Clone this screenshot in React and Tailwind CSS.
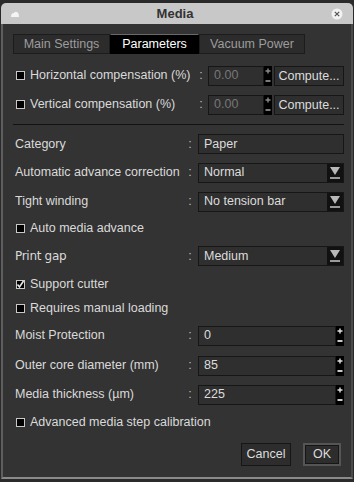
import React from "react";

function CheckBox({ checked }) {
  return (
    <span className="relative inline-block w-[9px] h-[9px] border border-[#c8c8c8] bg-black shrink-0">
      {checked && (
        <svg viewBox="0 0 9 9" className="absolute -top-[1px] -left-[1px] w-[9px] h-[9px]">
          <path d="M1.5 4.5 L3.5 7 L7.5 1" stroke="#e8e8e8" strokeWidth="1.6" fill="none" />
        </svg>
      )}
    </span>
  );
}

function Spinner({ dim }) {
  const c = dim ? "#8a8a8a" : "#e0e0e0";
  return (
    <div className="w-[8px] h-[20px] bg-black flex flex-col items-center justify-between py-[1px]">
      <svg viewBox="0 0 8 8" className="w-[8px] h-[8px]">
        <path d="M4 1.5 V6.5 M1.5 4 H6.5" stroke={c} strokeWidth="1.4" />
      </svg>
      <svg viewBox="0 0 8 8" className="w-[8px] h-[8px]">
        <path d="M1.5 4 H6.5" stroke={c} strokeWidth="1.8" />
      </svg>
    </div>
  );
}

function Field({ value, disabled, className }) {
  return (
    <div
      className={
        "h-[20px] bg-[#2f2f2f] border border-[#161616] flex items-center px-[5px] " +
        (disabled ? "text-[#777]" : "text-[#dcdcdc]") +
        " " +
        (className || "")
      }
    >
      {value}
    </div>
  );
}

function Select({ value }) {
  return (
    <div className="w-[146px] h-[20px] flex border border-[#161616] bg-[#2f2f2f]">
      <div className="flex-1 flex items-center px-[5px] text-[#dcdcdc]">{value}</div>
      <div className="w-[16px] h-full bg-[#111] flex items-center justify-center">
        <svg viewBox="0 0 12 16" className="w-[12px] h-[16px]">
          <path d="M1 2 H11 L6 10 Z" fill="#b8b8b8" />
          <rect x="1" y="12" width="10" height="2" fill="#9a9a9a" />
        </svg>
      </div>
    </div>
  );
}

function Row({ h, label, labelClass, children }) {
  return (
    <div className={"flex items-center " + h}>
      <div className={"flex-1 pl-[3px] " + (labelClass || "")}>{label}</div>
      <div className="w-[16px] text-center text-[#bbb]">:</div>
      {children}
    </div>
  );
}

function CheckRow({ h, label, checked }) {
  return (
    <div className={"flex items-center pl-[4px] " + h}>
      <CheckBox checked={checked} />
      <span className="ml-[5px]">{label}</span>
    </div>
  );
}

function CompRow({ h, label }) {
  return (
    <div className={"flex items-center pl-[4px] " + h}>
      <CheckBox />
      <span className="ml-[5px] flex-1">{label}</span>
      <span className="w-[14px] text-center text-[#bbb]">:</span>
      <Field value="0.00" disabled className="w-[56px]" />
      <Spinner dim />
      <button className="ml-[2px] w-[70px] h-[20px] bg-[#2e2e2e] border border-[#161616] text-[#dcdcdc]">
        Compute...
      </button>
    </div>
  );
}

function NumberRow({ h, label, value }) {
  return (
    <Row h={h} label={label}>
      <div className="flex">
        <Field value={value} className="w-[138px]" />
        <Spinner />
      </div>
    </Row>
  );
}

export default function App() {
  const tabs = [
    { label: "Main Settings", w: "w-[97px]" },
    { label: "Parameters", w: "w-[89px]", active: true },
    { label: "Vacuum Power", w: "w-[106px]" },
  ];

  return (
    <div className="w-[354px] h-[482px] bg-[#2a2a2a] pt-[3px] font-['Liberation_Sans',Arial,sans-serif] text-[12.5px] text-[#dadada] overflow-hidden">
      <div className="mx-[1px] h-[476px] flex flex-col">
        {/* title bar */}
        <div className="h-[21px] bg-[#c8c8c8] rounded-t-[5px] flex items-center px-[10px]">
          <svg viewBox="0 0 8 6" className="w-[8px] h-[6px]">
            <path d="M0 6 Q0 2 3 2 Q4 0 6 1 Q8 2 8 6 Z" fill="#f4f4f4" />
          </svg>
          <div className="flex-1 text-center font-bold text-[13px] text-[#333]">Media</div>
          <svg viewBox="0 0 12 12" className="w-[12px] h-[12px]">
            <circle cx="6" cy="6" r="5.5" fill="#f2f2f2" />
            <path d="M3.8 3.8 L8.2 8.2 M8.2 3.8 L3.8 8.2" stroke="#555" strokeWidth="1.2" />
          </svg>
        </div>

        {/* body */}
        <div className="flex-1 flex flex-col bg-[#333333] border-x-2 border-l-[#5e5e5e] border-r-[#4a4a4a] border-b-2 border-b-[#8a8a8a] pl-[9px] pr-[7px] pt-[10px]">
          <div className="flex h-[20px] ml-[1px]">
            {tabs.map((t, i) => (
              <div
                key={i}
                className={
                  "flex items-center justify-center border " +
                  t.w +
                  (t.active
                    ? " bg-black text-white border-black border-t-[#6a6a6a]"
                    : " bg-[#2c2c2c] text-[#9c9c9c] border-[#1c1c1c]")
                }
              >
                {t.label}
              </div>
            ))}
          </div>

          <div className="h-[7px]" />
          <CompRow h="h-[29px]" label="Horizontal compensation (%)" />
          <CompRow h="h-[29px]" label="Vertical compensation (%)" />
          <div className="mt-[5px] border-t border-[#121212] ml-[1px]" />

          <Row h="h-[28px] mt-[5px]" label="Category">
            <Field value="Paper" className="w-[146px]" />
          </Row>
          <Row h="h-[29px]" label="Automatic advance correction">
            <Select value="Normal" />
          </Row>
          <Row h="h-[29px]" label="Tight winding">
            <Select value="No tension bar" />
          </Row>
          <CheckRow h="h-[25px]" label="Auto media advance" />
          <Row
            h="h-[30px]"
            label="Print gap"
            labelClass="font-['DejaVu_Sans',sans-serif] text-[12px] tracking-[-0.3px]"
          >
            <Select value="Medium" />
          </Row>
          <CheckRow h="h-[26px]" label="Support cutter" checked />
          <CheckRow h="h-[23px]" label="Requires manual loading" />
          <NumberRow h="h-[31px]" label="Moist Protection" value="0" />
          <NumberRow h="h-[29px]" label="Outer core diameter (mm)" value="85" />
          <NumberRow h="h-[29px]" label="Media thickness (µm)" value="225" />
          <CheckRow h="h-[27px]" label="Advanced media step calibration" />

          <div className="flex justify-end items-center mt-[7px] pr-[3px]">
            <button className="w-[50px] h-[23px] bg-[#2d2d2d] border border-[#161616] text-[#dcdcdc]">
              Cancel
            </button>
            <button className="ml-[12px] w-[38px] h-[23px] bg-[#2d2d2d] border-2 border-[#555] text-[#dcdcdc] outline outline-1 -outline-offset-[3px] outline-[#161616]">
              OK
            </button>
          </div>
        </div>
      </div>
    </div>
  );
}
